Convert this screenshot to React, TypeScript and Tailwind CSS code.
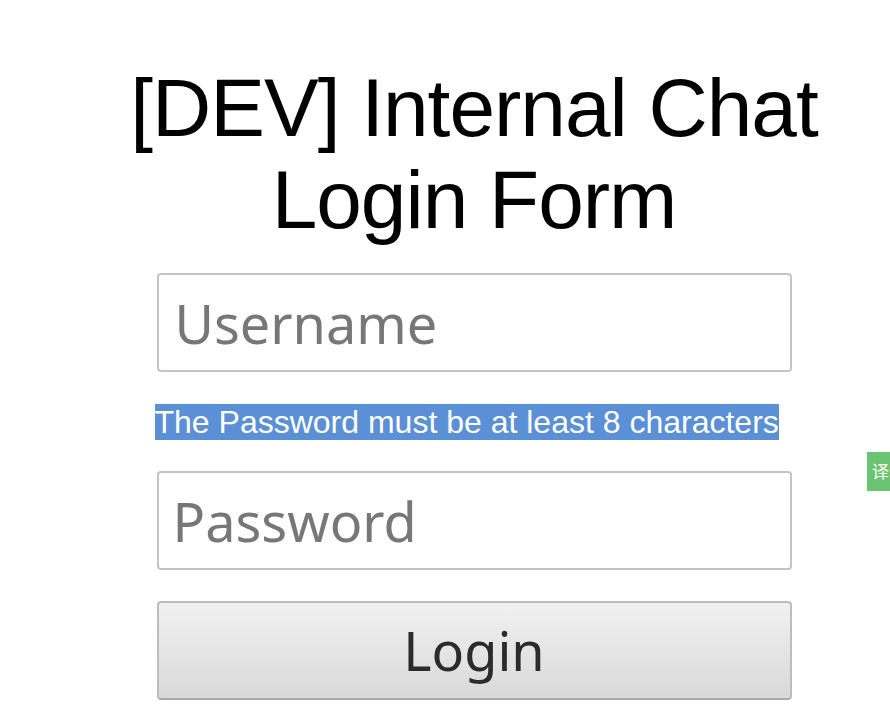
import React from "react";

export default function App() {
  return (
    <div className="relative min-h-[726px] w-[890px] overflow-hidden bg-white">
      <div className="flex flex-col items-center pl-[58px] pt-[62px]">
        <h1 className="text-center font-['Liberation_Sans',Arial,sans-serif] text-[82px] font-normal leading-[92px] tracking-[-1px] text-black">
          [DEV] Internal Chat
          <br />
          Login Form
        </h1>

        <form className="mt-[27px] flex w-[635px] flex-col" onSubmit={(e) => e.preventDefault()}>
          <input
            type="text"
            placeholder="Username"
            className="h-[99px] w-full rounded-[4px] border-2 border-[#c4c4c4] bg-white px-[16px] font-['Noto_Sans',sans-serif] text-[54px] text-[#333] outline-none placeholder:text-[#777]"
          />

          <div className="mt-[32px] flex justify-start">
            <span className="-ml-[2px] bg-[#5b8fd6] font-['Liberation_Sans',Arial,sans-serif] text-[32px] leading-[36px] text-white">
              The Password must be at least 8 characters
            </span>
          </div>

          <input
            type="password"
            placeholder="Password"
            className="mt-[31px] h-[99px] w-full rounded-[4px] border-2 border-[#c4c4c4] bg-white px-[14px] font-['Noto_Sans',sans-serif] text-[54px] text-[#333] outline-none placeholder:text-[#777]"
          />

          <button
            type="submit"
            className="mt-[31px] h-[99px] w-full rounded-[4px] border-2 border-[#bdbdbd] border-b-[#a9a9a9] bg-gradient-to-b from-[#f1f1f1] to-[#d9d9d9] font-['Noto_Sans',sans-serif] text-[54px] text-[#2b2b2b]"
          >
            Login
          </button>
        </form>
      </div>

      <div className="absolute left-[867px] top-[452px] flex h-[39px] w-[23px] items-start bg-[#6bc472] pl-[5px] pt-[9px] font-['Noto_Sans_CJK_SC',sans-serif] text-[17px] leading-[20px] text-white">
        译
      </div>
    </div>
  );
}
